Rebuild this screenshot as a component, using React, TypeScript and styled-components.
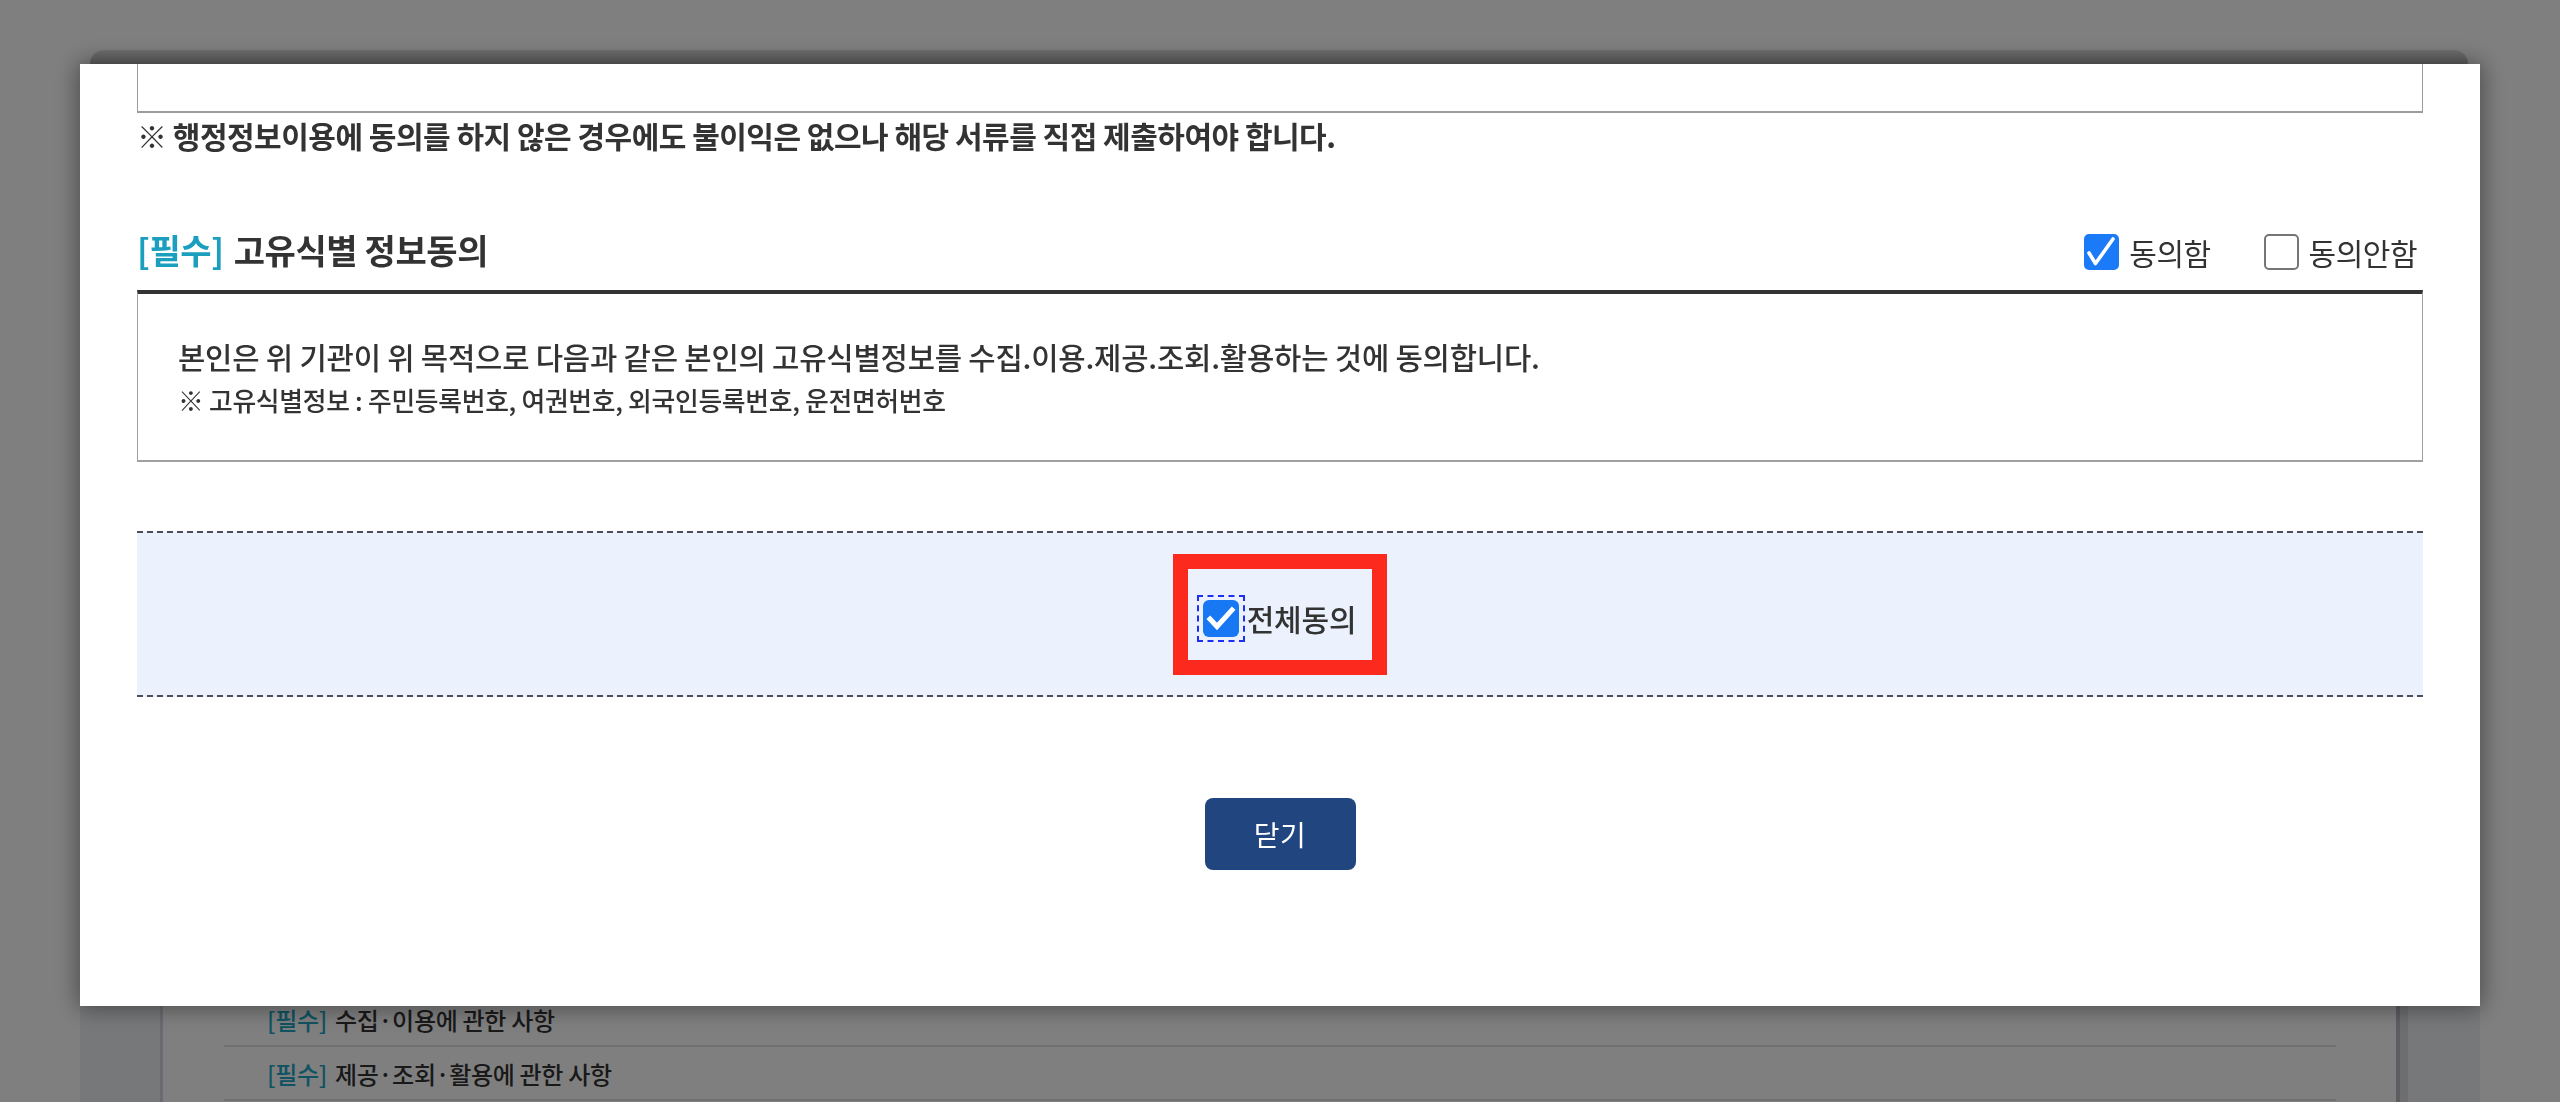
import React from "react";
import styled, { createGlobalStyle } from "styled-components";

const GlobalStyle = createGlobalStyle`
  html, body {
    margin: 0;
    padding: 0;
    background: #ffffff;
  }
  body {
    width: 2560px;
    height: 1102px;
    overflow: hidden;
    font-family: "Noto Sans CJK KR", "Noto Sans", sans-serif;
    color: #333333;
  }
  * { box-sizing: border-box; }
`;

/* ---------- page behind the dialog ---------- */

const Page = styled.div`
  width: 2560px;
  height: 1102px;
  padding: 300px 80px 0;
  overflow: hidden;
`;

const Screen = styled.div`
  height: 100%;
  background: #eef0f5;
`;

const ListPanel = styled.div`
  height: 100%;
  margin: 0 80px;
  background: #ffffff;
  border-left: 3px solid #d4d6e0;
  border-right: 4px solid #babcc4;
  box-shadow: 8px 0 0 0 #dcdde2;
  padding: 693px 60px 0 61px;
`;

const ListRow = styled.div`
  height: 54px;
  display: flex;
  align-items: center;
  padding-left: 43px;
  border-bottom: 2px solid #e1e1e1;
  font-size: 24px;
  font-weight: 500;
  letter-spacing: -0.3px;
  color: #333333;
  gap: 8px;
`;

const Tag = styled.span`
  color: #22a6c4;
`;

const Dim = styled.div`
  position: fixed;
  inset: 0;
  background: rgba(0, 0, 0, 0.5);
`;

/* ---------- dialog ---------- */

const Modal = styled.div`
  position: fixed;
  top: 64px;
  left: 80px;
  width: 2400px;
  height: 942px;
  background: #ffffff;
  padding: 0 57px 136px;
  box-shadow: 0 0 22px 2px rgba(0, 0, 0, 0.42);
  display: flex;
  flex-direction: column;

  &::before {
    content: "";
    position: absolute;
    top: -14px;
    left: 10px;
    right: 12px;
    height: 14px;
    border-radius: 16px 16px 0 0;
    background: linear-gradient(rgba(0, 0, 0, 0.12), rgba(0, 0, 0, 0.26));
  }
`;

const ScrolledBox = styled.div`
  height: 49px;
  border: 1px solid #9c9c9c;
  border-top: none;
  border-bottom-width: 2px;
`;

const Notice = styled.p`
  margin: 6px 0 0;
  line-height: 32px;
  font-size: 30px;
  font-weight: 700;
  letter-spacing: -0.5px;
  color: #333333;
`;

const SectionHeader = styled.div`
  margin-top: 75px;
  height: 48px;
  display: flex;
  align-items: center;
  justify-content: space-between;
  padding-right: 6px;
`;

const SectionTitle = styled.h3`
  margin: 0;
  font-size: 34px;
  line-height: 44px;
  font-weight: 700;
  letter-spacing: -0.4px;
  color: #333333;
  display: flex;
  gap: 10px;
`;

const Required = styled.span`
  color: #1c9fbe;
`;

const ChoiceGroup = styled.div`
  display: flex;
  align-items: center;
  gap: 53px;
  padding-top: 4px;
`;

const Choice = styled.label`
  display: flex;
  align-items: center;
  gap: 10px;
  font-size: 30px;
  line-height: 36px;
  font-weight: 400;
  letter-spacing: -0.5px;
  color: #333333;
`;

const SmallBox = styled.span<{ $checked: boolean }>`
  width: 35px;
  height: 36px;
  border-radius: 5px;
  display: flex;
  align-items: center;
  justify-content: center;
  background: ${(p) => (p.$checked ? "#1a7af8" : "#ffffff")};
  border: ${(p) => (p.$checked ? "none" : "2px solid #767676")};
`;

const ContentBox = styled.div`
  margin-top: 16px;
  border: 1px solid #a0a0a0;
  border-top: 4px solid #333333;
  border-bottom-width: 2px;
  padding: 43px 40px 43px 40px;
`;

const ContentMain = styled.p`
  margin: 0;
  font-size: 29.7px;
  line-height: 40px;
  font-weight: 500;
  letter-spacing: -0.2px;
  color: #333333;
`;

const ContentSub = styled.p`
  margin: 6px 0 0;
  font-size: 25.8px;
  line-height: 34px;
  font-weight: 500;
  letter-spacing: -0.3px;
  color: #333333;
`;

const AllAgreeBar = styled.div`
  margin-top: 69px;
  height: 166px;
  background: #ebf2fd;
  border-top: 2px dashed #4b4d5c;
  border-bottom: 2px dashed #4b4d5c;
  display: flex;
  align-items: center;
  justify-content: center;
`;

const Highlight = styled.label`
  border: 15px solid #fc2a1e;
  padding: 26px 16px 18px 9px;
  display: flex;
  align-items: center;
  gap: 2px;
`;

const FocusRing = styled.span`
  width: 48px;
  height: 47px;
  border: 2px dashed #1e2ff2;
  display: flex;
  align-items: center;
  justify-content: center;
`;

const BigBox = styled.span`
  width: 36px;
  height: 37px;
  border-radius: 6px;
  background: #1877f2;
  display: flex;
  align-items: center;
  justify-content: center;
`;

const AllLabel = styled.span`
  font-size: 30px;
  line-height: 36px;
  font-weight: 500;
  letter-spacing: -0.2px;
  color: #333333;
`;

const CloseButton = styled.button`
  margin: 101px auto 0;
  width: 151px;
  height: 72px;
  border: none;
  border-radius: 8px;
  background: #21467f;
  color: #ffffff;
  font-family: "Noto Sans CJK KR", "Noto Sans", sans-serif;
  font-size: 28px;
  font-weight: 400;
  letter-spacing: 0.5px;
  cursor: pointer;
`;

const ThinCheck = () => (
  <svg width="35" height="36" viewBox="0 0 35 36">
    <path
      d="M5 19 L11.5 29.5 L29 5"
      fill="none"
      stroke="#ffffff"
      strokeWidth="3.6"
      strokeLinecap="round"
      strokeLinejoin="round"
    />
  </svg>
);

const BoldCheck = () => (
  <svg width="36" height="37" viewBox="0 0 36 37">
    <path
      d="M7 19 L14 26.5 L29 10"
      fill="none"
      stroke="#ffffff"
      strokeWidth="5"
      strokeLinecap="square"
      strokeLinejoin="miter"
    />
  </svg>
);

export default function App() {
  return (
    <>
      <GlobalStyle />
      <Page>
        <Screen>
          <ListPanel>
            <ListRow>
              <Tag>[필수]</Tag>
              <span>수집·이용에 관한 사항</span>
            </ListRow>
            <ListRow>
              <Tag>[필수]</Tag>
              <span>제공·조회·활용에 관한 사항</span>
            </ListRow>
          </ListPanel>
        </Screen>
      </Page>
      <Dim />
      <Modal role="dialog">
        <ScrolledBox />
        <Notice>
          ※ 행정정보이용에 동의를 하지 않은 경우에도 불이익은 없으나 해당 서류를 직접 제출하여야 합니다.
        </Notice>

        <SectionHeader>
          <SectionTitle>
            <Required>[필수]</Required>
            <span>고유식별 정보동의</span>
          </SectionTitle>
          <ChoiceGroup>
            <Choice>
              <SmallBox $checked>
                <ThinCheck />
              </SmallBox>
              동의함
            </Choice>
            <Choice>
              <SmallBox $checked={false} />
              동의안함
            </Choice>
          </ChoiceGroup>
        </SectionHeader>

        <ContentBox>
          <ContentMain>
            본인은 위 기관이 위 목적으로 다음과 같은 본인의 고유식별정보를 수집.이용.제공.조회.활용하는 것에 동의합니다.
          </ContentMain>
          <ContentSub>※ 고유식별정보 : 주민등록번호, 여권번호, 외국인등록번호, 운전면허번호</ContentSub>
        </ContentBox>

        <AllAgreeBar>
          <Highlight>
            <FocusRing>
              <BigBox>
                <BoldCheck />
              </BigBox>
            </FocusRing>
            <AllLabel>전체동의</AllLabel>
          </Highlight>
        </AllAgreeBar>

        <CloseButton type="button">닫기</CloseButton>
      </Modal>
    </>
  );
}
